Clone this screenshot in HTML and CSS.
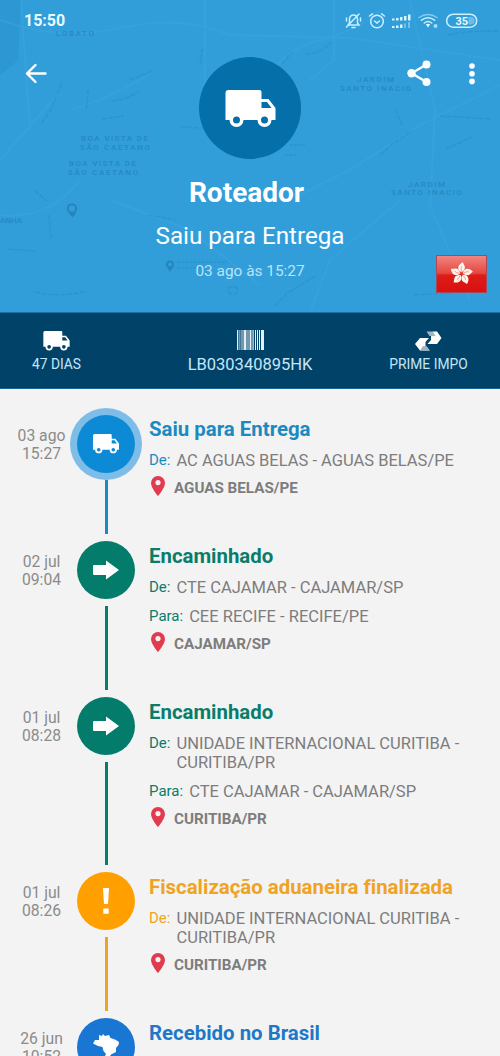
FILE: index.html
```html
<!DOCTYPE html>
<html lang="pt-BR">
<head>
<meta charset="utf-8">
<title>Roteador</title>
<link rel="stylesheet" href="styles.css">
</head>
<body>
<svg class="defs" width="0" height="0">
  <symbol id="truck" viewBox="0 0 50 38">
    <path fill="currentColor" fill-rule="evenodd" d="M3 0H34Q36 0 36 2V9H43L50 18V30H46A7 7 0 0 1 32 30H18A7 7 0 0 1 4 30H0V3Q0 0 3 0ZM36 12V18H46L41.500 12ZM11 26.500A3.500 3.500 0 1 0 11 33.500A3.500 3.500 0 1 0 11 26.500ZM39 26.500A3.500 3.500 0 1 0 39 33.500A3.500 3.500 0 1 0 39 26.500Z"/>
  </symbol>
  <symbol id="arrow" viewBox="0 0 26 20"><path fill="#fff" d="M1 5H13V.5L26 10L13 19.500V15H1Q0 15 0 14V6Q0 5 1 5Z"/></symbol>
  <symbol id="pin" viewBox="0 0 14 20"><path fill="#e23b50" fill-rule="evenodd" d="M7 0A7 7 0 0 0 0 7C0 12 7 20 7 20S14 12 14 7A7 7 0 0 0 7 0ZM7 4A2.600 2.600 0 1 1 7 9.200A2.600 2.600 0 1 1 7 4Z"/></symbol>
</svg>
<header class="hero">
  <svg class="map" viewBox="0 0 500 313">
    <path class="shade" d="M0 0H21L18 60L0 76Z"/>
    <g class="road">
      <path d="M0 20Q60 42 120 28T230 35L350 38L500 60"/>
      <path d="M21 0L30 130M0 160L60 92M205 0V90M334 0V60L310 80M0 215Q50 220 80 180"/>
      <path d="M500 85L420 125L350 170L300 195M410 0L435 110L430 205L470 300M110 200L190 230L260 285M310 312L330 260L400 200"/>
      <path d="M270 80Q280 50 320 40T380 10M70 110Q120 95 155 70"/>
    </g>
    <g class="street">
      <path d="M42 123L51 109L62 83M130 80L153 71M112 101Q128 99 139 91M200 65L202 49M282 64L292 52M306 54Q323 53 331 42M380 155L392 144L412 131M440 116L492 119M448 35Q475 30 500 31M395 109L402 125M275 306L286 294L317 275M35 292Q60 298 87 291M7 249L35 251M49 215L51 238M35 191L47 201"/>
      <path d="M102 119L124 116M181 127L203 128M414 295L451 293M148 215L176 220M446 149L472 137M88 90L86 110"/>
    </g>
    <g class="places">
      <text x="56" y="36" textLength="38">LOBATO</text>
      <text x="81" y="141" textLength="67">BOA VISTA DE</text>
      <text x="80" y="150" textLength="70">SÃO CAETANO</text>
      <text x="69" y="166" textLength="67">BOA VISTA DE</text>
      <text x="68" y="175" textLength="70">SÃO CAETANO</text>
      <text x="357" y="82" textLength="37">JARDIM</text>
      <text x="340" y="91" textLength="71">SANTO INACIO</text>
      <text x="408" y="187" textLength="37">JARDIM</text>
      <text x="391" y="195" textLength="71">SANTO INACIO</text>
      <text x="0" y="223" textLength="22">ANHA</text>
    </g>
    <g class="mark"><circle cx="72" cy="208.500" r="4.200"/><path d="M70 213L72.500 216L75 213"/><circle cx="170" cy="264.500" r="3"/><path d="M168.500 268L170 270L171.500 268"/></g>
    <path class="poi" d="M177 262H227M177 268H202M290 145H305M285 155H296M229 287H237V294H229Z"/>
  </svg>

  <div class="status">
    <span class="clock">15:50</span>
    <svg class="indicators" viewBox="0 0 134 20">
      <g fill="none" stroke="#c9f0ff" stroke-width="1.500" stroke-linecap="round">
        <path d="M3 14H14L12.500 12V8Q12 4 8.500 4T4.500 8V12L3 14M7 16.500H10M14 3L1.500 16M1.500 7V10M15.500 7V10"/>
        <circle cx="32" cy="10.500" r="6.300"/><path d="M24.500 5L27.500 2.800M36.500 2.800L39.500 5M29.500 10L32 12L34.500 10"/>
        <path opacity=".55" d="M74 6.500Q83 .5 92 6.500"/><path d="M76.500 9.200Q83 4.500 89.500 9.200M79.300 12Q83 9.200 86.700 12"/>
        <rect x="101.700" y="3.200" width="30" height="13" rx="6.500"/>
      </g>
      <path d="M80.800 13.300Q83 12 85.200 13.300L83 16.500Z" fill="#e4faff"/>
      <circle cx="90.500" cy="15" r="2" fill="#a8dbf4"/>
      <g fill="#d8f5ff"><path d="M47 7.500h2.500v2h-2.500zM51 7h2.500v2.500h-2.500zM55 6h2.500v3.500h-2.500zM59 5h2.500v4.500h-2.500zM63 3.500h2.500v6h-2.500zM47 15h2.500v2h-2.500zM51 14.500h2.500v2.500h-2.500zM55 13.500h2.500v3.500h-2.500z"/><path opacity=".4" d="M59 12.500h2v4.500h-2zM63 11h2v6h-2z"/></g>
      <path d="M123.500 6H126A3.700 3.700 0 0 1 126 13.500H123.500Z" fill="#6fbde7"/>
      <text x="110.500" y="13.800" class="battery">35</text>
    </svg>
  </div>

  <div class="toolbar">
    <svg class="back" viewBox="0 0 22 22"><path d="M10.500 2L2 10.500L10.500 19M2 10.500H20.500" fill="none" stroke="#fff" stroke-width="2.400" stroke-linecap="round" stroke-linejoin="round"/></svg>
    <div class="badge"><svg class="truck-big"><use href="#truck"/></svg></div>
    <div class="actions">
      <svg class="share" viewBox="0 0 24 27"><path d="M19.500 4.500L4.500 13.200L19.500 22" fill="none" stroke="#fff" stroke-width="2.300"/><g fill="#fff"><circle cx="19.500" cy="4.500" r="4"/><circle cx="4.500" cy="13.200" r="4.200"/><circle cx="19.500" cy="22" r="4"/></g></svg>
      <svg class="more" viewBox="0 0 6 22"><g fill="#fff"><circle cx="3" cy="3" r="2.800"/><circle cx="3" cy="10.700" r="2.800"/><circle cx="3" cy="18.400" r="2.800"/></g></svg>
    </div>
  </div>

  <h1 class="name">Roteador</h1>
  <p class="state">Saiu para Entrega</p>
  <p class="when">03 ago às 15:27</p>

  <svg class="flag" viewBox="0 0 51 38">
    <defs>
      <linearGradient id="red" x2="0" y2="1"><stop offset="0" stop-color="#f28681"/><stop offset=".48" stop-color="#e6463f"/><stop offset=".53" stop-color="#dc1d18"/><stop offset="1" stop-color="#d9100f"/></linearGradient>
      <path id="petal" d="M0-1.500C-5-3.500-4-9.500 1.500-11.500C2-9 4.500-7 3-4.500Q2-2.500 0-1.500Z"/>
    </defs>
    <rect x=".5" y=".5" width="50" height="37" fill="url(#red)" stroke="#a9475d"/>
    <g transform="translate(25.500 18.800)" fill="#fff5ed"><use href="#petal"/><use href="#petal" transform="rotate(72)"/><use href="#petal" transform="rotate(144)"/><use href="#petal" transform="rotate(216)"/><use href="#petal" transform="rotate(288)"/></g>
    <g transform="translate(25.500 18.800)" fill="none" stroke="#e86a61" stroke-width=".6"><path id="vein" d="M0-2Q-1-5 .3-7.500"/><use href="#vein" transform="rotate(72)"/><use href="#vein" transform="rotate(144)"/><use href="#vein" transform="rotate(216)"/><use href="#vein" transform="rotate(288)"/></g>
  </svg>
</header>

<section class="summary">
  <div class="fact days"><svg class="fact-truck"><use href="#truck"/></svg><span>47 DIAS</span></div>
  <div class="fact code"><svg class="barcode" viewBox="0 0 27 20"><path fill="#e3eef5" d="M0 0h1.300v20H0zM2.500 0h.8v20h-.8zM4.500 0h1v20h-1zM6.500 0h3v20H6.500zM10.500 0h1v20h-1zM12.500 0h2v20h-2zM15.500 0h1.200v20h-1.200zM18 0h1v20h-1zM20 0h1v20h-1zM22 0h1v20h-1zM24 0h3v20h-3z"/></svg><span>LB030340895HK</span></div>
  <div class="fact service"><svg class="swap" viewBox="0 0 27 20"><path fill="#fff" d="M14.500 4.500L18 .5H22L26.500 7L22 13H12.500L16 9V5ZM0 13L5 7H14L10.500 11V15L14.500 19.500H5Z"/><path fill="#9eb6c5" d="M11.500.5H18L20.500 5H14.500ZM8 15H11.500L15 19.500H5Z"/></svg><span>PRIME IMPO</span></div>
</section>

<main class="timeline">
  <article class="event blue current">
    <time>03 ago<br>15:27</time>
    <div class="track"><div class="dot"><svg class="dot-truck"><use href="#truck"/></svg></div></div>
    <div class="body"><h2>Saiu para Entrega</h2>
      <p class="row"><b>De:</b><span>AC AGUAS BELAS - AGUAS BELAS/PE</span></p>
      <p class="place"><svg class="pin"><use href="#pin"/></svg>AGUAS BELAS/PE</p></div>
  </article>
  <article class="event green second">
    <time>02 jul<br>09:04</time>
    <div class="track"><div class="dot"><svg class="arrow"><use href="#arrow"/></svg></div></div>
    <div class="body"><h2>Encaminhado</h2>
      <p class="row"><b>De:</b><span>CTE CAJAMAR - CAJAMAR/SP</span></p>
      <p class="row"><b>Para:</b><span>CEE RECIFE - RECIFE/PE</span></p>
      <p class="place"><svg class="pin"><use href="#pin"/></svg>CAJAMAR/SP</p></div>
  </article>
  <article class="event green third">
    <time>01 jul<br>08:28</time>
    <div class="track"><div class="dot"><svg class="arrow"><use href="#arrow"/></svg></div></div>
    <div class="body"><h2>Encaminhado</h2>
      <p class="row"><b>De:</b><span>UNIDADE INTERNACIONAL CURITIBA -<br>CURITIBA/PR</span></p>
      <p class="row"><b>Para:</b><span>CTE CAJAMAR - CAJAMAR/SP</span></p>
      <p class="place"><svg class="pin"><use href="#pin"/></svg>CURITIBA/PR</p></div>
  </article>
  <article class="event orange fourth">
    <time>01 jul<br>08:26</time>
    <div class="track"><div class="dot"><svg class="alert" viewBox="0 0 6 26"><path fill="#fff" d="M0 0H6L5 16H1ZM.3 20.500H5.700V25.700H.3Z"/></svg></div></div>
    <div class="body"><h2>Fiscalização aduaneira finalizada</h2>
      <p class="row"><b>De:</b><span>UNIDADE INTERNACIONAL CURITIBA -<br>CURITIBA/PR</span></p>
      <p class="place"><svg class="pin"><use href="#pin"/></svg>CURITIBA/PR</p></div>
  </article>
  <article class="event royal last">
    <time>26 jun<br>10:52</time>
    <div class="track"><div class="dot"><svg class="brazil" viewBox="0 0 26 27"><path fill="#fff" d="M6 1L9 2L10 0L12 2L16 1L17.500 4L22 5.500L26 8L25.500 11L23 14V18L18 20.500L14 27L11 24L13 20L10.500 17L9.500 13L5 12L0 9.500L2 6H6Z"/></svg></div></div>
    <div class="body"><h2>Recebido no Brasil</h2></div>
  </article>
</main>
</body>
</html>
```

FILE: styles.css
```css
* { box-sizing: border-box; }
html, body { height: 1056px; overflow: hidden; }
body { margin: 0; width: 500px; background: #f3f3f3; color: #7d7d7d; font-family: Roboto, "Liberation Sans", sans-serif; font-variant-ligatures: none; display: flex; flex-direction: column; }
h1, h2, p { margin: 0; }
svg { display: block; flex: none; }
.defs { position: absolute; }

.hero { position: relative; flex: none; height: 313px; background: #319eda; color: #fff; text-align: center; overflow: hidden; border-bottom: 1px solid #1b71a8; }
.map { position: absolute; inset: 0; width: 500px; height: 313px; }
.shade { fill: #2b94d0; opacity: .7; }
.road { fill: none; stroke: #3ba5df; stroke-width: 2; opacity: .5; }
.street { fill: none; stroke: #2380b7; stroke-width: 1.6; stroke-dasharray: 5 1.5; opacity: .3; }
.places { fill: #176c9f; opacity: .42; font-size: 8px; font-weight: 500; }
.mark { fill: none; stroke: #1e75a9; stroke-width: 2; opacity: .6; }
.poi { fill: none; stroke: #2380b7; stroke-width: 2; stroke-dasharray: 3 1; opacity: .25; }

.status { position: relative; height: 40px; padding: 11px 21px 0 24px; display: flex; justify-content: space-between; }
.clock { font-size: 16px; line-height: 20px; font-weight: 700; color: #e6faff; }
.indicators { width: 134px; height: 20px; }
.battery { fill: #e6faff; font-size: 11px; font-weight: 700; }

.toolbar { position: relative; height: 120px; padding: 0 24px; display: grid; grid-template-columns: 1fr 102px 1fr; }
.back { width: 22px; height: 22px; margin: 23px 0 0 1px; }
.badge { width: 102px; height: 102px; margin-top: 17px; border-radius: 50%; background: #056faa; display: flex; justify-content: center; padding-top: 33px; }
.truck-big { width: 51px; height: 38px; }
.actions { display: flex; justify-content: flex-end; gap: 38px; padding: 20px 1px 0 0; }
.share { width: 24px; height: 27px; }
.more { width: 6px; height: 22px; margin-top: 3px; }

.name { position: relative; margin-top: 16px; margin-right: 7px; font-size: 28px; line-height: 34px; font-weight: 700; }
.state { position: relative; margin-top: 11px; font-size: 24.2px; line-height: 30px; }
.when { position: relative; margin-top: 11px; font-size: 15.4px; line-height: 18px; color: #b9e3f8; }
.flag { position: absolute; left: 436px; top: 255px; width: 51px; height: 38px; }

.summary { flex: none; height: 76px; background: #014268; border-bottom: 1px solid #1b6595; color: #c5e6f8; display: grid; grid-template-columns: 113px 1fr 143px; }
.fact { display: flex; flex-direction: column; align-items: center; padding-top: 17px; font-size: 13.8px; line-height: 18px; white-space: nowrap; }
.fact span { margin-top: 6px; }
.fact-truck { width: 27px; height: 20px; margin-top: 1px; color: #fff; }
.fact-truck + span, .swap + span { margin-top: 4px; }
.barcode { width: 27px; height: 20px; }
.code { padding-left: 30px; font-size: 16.5px; }
.swap { width: 27px; height: 20px; margin-top: 1px; }

.timeline { flex: 1; min-height: 0; overflow: hidden; padding-top: 26px; }
.event { display: grid; grid-template-columns: 77px 58px 1fr; }
.current { height: 126px; }
.second { height: 156px; }
.third { height: 175px; }
.fourth { height: 146px; }
.last { height: 38px; }
.blue { --tone: #0c8ad6; --text: #1b8ac0; }
.green { --tone: #037c6b; --text: #087d6a; }
.orange { --tone: #ffa000; --text: #efa325; }
.royal { --tone: #1976d3; --text: #1e78c7; }

time { padding: 12px 0 0 6px; font-size: 15.7px; line-height: 18px; text-align: center; color: #8b8b8b; }
.track { display: flex; flex-direction: column; align-items: center; }
.dot { flex: none; width: 58px; height: 58px; border-radius: 50%; background: var(--tone); display: flex; align-items: center; justify-content: center; }
.current .dot { box-shadow: 0 0 0 7px #7dbde7; }
.track::after { content: ""; width: 3px; flex: 1; margin: 7px 0; background: var(--text); }
.last .track::after { display: none; }
.dot-truck { width: 26px; height: 20px; color: #fff; }
.arrow { width: 26px; height: 20px; }
.alert { width: 6px; height: 26px; }
.brazil { width: 26px; height: 27px; }

.body { padding: 3px 0 0 14px; white-space: nowrap; }
.current .body { padding-top: 2px; }
h2 { font-size: 20.4px; line-height: 24px; font-weight: 700; color: var(--text); }
.row { display: flex; margin-top: 10px; font-size: 16.5px; line-height: 19px; }
.row b { font-size: 15px; font-weight: 400; color: var(--text); margin-right: 6px; }
.place { display: flex; align-items: center; gap: 9px; padding-left: 2px; margin-top: 8px; height: 20px; font-size: 15.2px; font-weight: 700; }
.pin { width: 14px; height: 20px; position: relative; top: -2px; }
```
